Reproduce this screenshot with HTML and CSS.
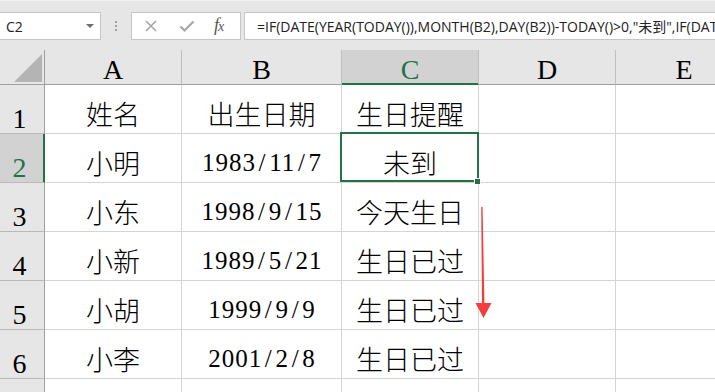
FILE: index.html
```html
<!DOCTYPE html>
<html lang="zh">
<head>
<meta charset="utf-8">
<title>Excel</title>
<link rel="stylesheet" href="styles.css">
</head>
<body>
<div class="app">
  <div class="fbar">
    <div class="namebox"><span class="ref">C2</span><span class="caret"></span></div>
    <div class="grip"><i></i><i></i><i></i></div>
    <div class="btns">
      <svg class="ico" width="14" height="14" viewBox="0 0 14 14"><path d="M2 2L12 12M12 2L2 12" stroke="#a6a6a6" stroke-width="1.6" fill="none"/></svg>
      <svg class="ico" width="16" height="14" viewBox="0 0 16 14"><path d="M1.5 7.5L5.5 11.5L14.5 2.5" stroke="#a6a6a6" stroke-width="2.2" fill="none"/></svg>
      <span class="fx"><i>f</i><i class="x">x</i></span>
    </div>
    <div class="formula"><span class="ftext">=IF(DATE(YEAR(TODAY()),MONTH(B2),DAY(B2))-TODAY()&gt;0,"未到",IF(DATE(YEAR(TODAY()),MONTH(B2),DAY(B2))-TODAY()=0,"今天生日","生日已过"))</span></div>
  </div>
  <div class="sheet">
    <div class="corner"><svg width="28" height="28" viewBox="0 0 28 28"><path d="M0 28L28 28L28 0Z" fill="#b4b4b4"/></svg></div>
    <div class="ch">A</div>
    <div class="ch">B</div>
    <div class="ch sel">C</div>
    <div class="ch">D</div>
    <div class="ch">E</div>

    <div class="rh">1</div>
    <div class="c">姓名</div>
    <div class="c">出生日期</div>
    <div class="c">生日提醒</div>
    <div class="c"></div>
    <div class="c"></div>

    <div class="rh sel">2</div>
    <div class="c">小明</div>
    <div class="c num">1983<span class="sl">/</span>11<span class="sl">/</span>7</div>
    <div class="c active">未到<span class="handle"></span></div>
    <div class="c"></div>
    <div class="c"></div>

    <div class="rh">3</div>
    <div class="c">小东</div>
    <div class="c num">1998<span class="sl">/</span>9<span class="sl">/</span>15</div>
    <div class="c">今天生日</div>
    <div class="c"></div>
    <div class="c"></div>

    <div class="rh">4</div>
    <div class="c">小新</div>
    <div class="c num">1989<span class="sl">/</span>5<span class="sl">/</span>21</div>
    <div class="c">生日已过</div>
    <div class="c"></div>
    <div class="c"></div>

    <div class="rh">5</div>
    <div class="c">小胡</div>
    <div class="c num">1999<span class="sl">/</span>9<span class="sl">/</span>9</div>
    <div class="c">生日已过</div>
    <div class="c"></div>
    <div class="c"></div>

    <div class="rh">6</div>
    <div class="c">小李</div>
    <div class="c num">2001<span class="sl">/</span>2<span class="sl">/</span>8</div>
    <div class="c">生日已过</div>
    <div class="c"></div>
    <div class="c"></div>

    <div class="rh">7</div>
    <div class="c"></div>
    <div class="c"></div>
    <div class="c"></div>
    <div class="c"></div>
    <div class="c"></div>
  </div>
  <svg class="arrow" width="20" height="116" viewBox="0 0 20 116">
    <path d="M6.2 2L7.6 2L9.4 98L16.5 98L8.5 113L0.5 98L7 98Z" fill="#f63c3c"/>
  </svg>
</div>
</body>
</html>
```
FILE: styles.css
```css
* { box-sizing: border-box; }
html, body { margin: 0; padding: 0; }
body { width: 715px; height: 392px; overflow: hidden; background: #e6e6e6; }

.app { position: relative; width: 715px; height: 392px; overflow: hidden; }

.fbar {
  height: 50px;
  display: flex;
  align-items: flex-start;
  padding-top: 12px;
  border-top: 1px solid #f2f2f2;
  background: #e6e6e6;
}
.namebox {
  width: 102px;
  height: 28px;
  margin-left: -1px;
  margin-top: -1px;
  background: #fff;
  border: 1px solid #c6c6c6;
  display: flex;
  align-items: center;
  padding-left: 6px;
  font-family: "Open Sans", "Liberation Sans", sans-serif;
  font-size: 14px;
  color: #222;
}
.ref { flex: 1; }
.caret {
  width: 0; height: 0;
  border-left: 4px solid transparent;
  border-right: 4px solid transparent;
  border-top: 4px solid #6d6d6d;
  margin-right: 6px;
}
.grip {
  width: 30px;
  height: 28px;
  margin-top: -1px;
  display: flex;
  flex-direction: column;
  align-items: center;
  justify-content: center;
  gap: 2px;
}
.grip i { display: block; width: 2px; height: 2px; background: #a0a0a0; }
.btns {
  width: 110px;
  height: 28px;
  margin-top: -1px;
  background: #fff;
  border: 1px solid #c6c6c6;
  display: flex;
  align-items: center;
  padding-left: 12px;
}
.btns .ico { display: block; }
.btns .ico:nth-child(2) { margin-left: 21px; }
.fx {
  margin-left: 19px;
  font-family: "Liberation Serif", serif;
  font-style: italic;
  color: #555;
  font-size: 18px;
  line-height: 18px;
  letter-spacing: -1px;
}
.fx .x { font-size: 14px; }
.formula {
  flex: 1;
  height: 28px;
  margin-top: -1px;
  margin-left: 3px;
  background: #fff;
  border: 1px solid #c6c6c6;
  border-right: none;
  display: flex;
  align-items: center;
  padding-left: 12px;
  overflow: hidden;
  white-space: nowrap;
  font-family: "Open Sans", "Noto Sans CJK SC", sans-serif;
  font-size: 14px;
  color: #222;
}

.sheet {
  display: grid;
  grid-template-columns: 45px 137px 160px 137px 137px 137px;
  grid-template-rows: 35px repeat(7, 49px);
  background: #fff;
}
.corner {
  background: #e6e6e6;
  border-right: 1px solid #9f9f9f;
  border-bottom: 1px solid #9f9f9f;
  display: flex;
  justify-content: flex-end;
  align-items: flex-end;
  padding: 0 2px 2px 0;
}
.corner svg { display: block; }
.ch {
  background: #e6e6e6;
  border-right: 1px solid #bfbfbf;
  border-bottom: 1px solid #9f9f9f;
  display: flex;
  justify-content: center;
  align-items: flex-end;
  font-family: "Liberation Serif", serif;
  font-size: 28px;
  line-height: 28px;
  color: #000;
}
.ch.sel {
  background: #d2d2d2;
  color: #217346;
  border-bottom-color: #217346;
  box-shadow: inset 0 -1px 0 #217346;
}
.rh {
  background: #e6e6e6;
  border-right: 1px solid #9f9f9f;
  border-bottom: 1px solid #b9b9b9;
  display: flex;
  justify-content: center;
  align-items: flex-end;
  padding-right: 5px;
  font-family: "Liberation Serif", serif;
  font-size: 28px;
  line-height: 28px;
  color: #000;
}
.rh.sel {
  background: #d2d2d2;
  color: #217346;
  border-right-color: #217346;
  box-shadow: inset -1px 0 0 #217346;
}
.c {
  position: relative;
  border-right: 1px solid #d4d4d4;
  border-bottom: 1px solid #d4d4d4;
  display: flex;
  justify-content: center;
  align-items: flex-end;
  padding-bottom: 6px;
  font-family: "Noto Sans CJK SC", sans-serif;
  font-weight: 300;
  font-size: 27px;
  line-height: 27px;
  color: #000;
  white-space: nowrap;
}
.c.num {
  font-family: "Liberation Serif", serif;
  font-weight: 400;
  font-size: 25px;
  line-height: 25px;
  letter-spacing: 1px;
  padding-bottom: 7px;
  padding-left: 1px;
}
.sl { margin: 0 2.7px; }
.c.active::after {
  content: "";
  position: absolute;
  left: -2px;
  top: -2px;
  right: -1px;
  bottom: 0;
  border: 2px solid #217346;
}
.handle {
  position: absolute;
  right: -2px;
  bottom: -2px;
  width: 5px;
  height: 5px;
  background: #217346;
  outline: 1px solid #fff;
  z-index: 2;
}
.arrow {
  position: absolute;
  left: 475px;
  top: 205px;
}
```
